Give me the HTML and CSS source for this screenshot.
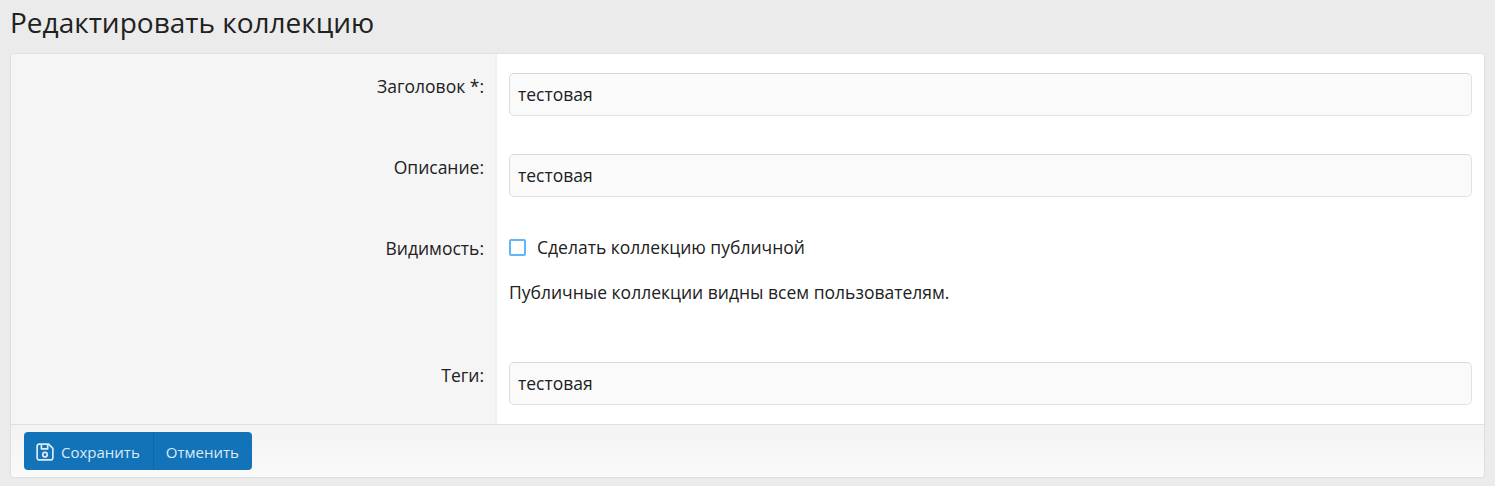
FILE: index.html
```html
<!DOCTYPE html>
<html lang="ru">
<head>
<meta charset="utf-8">
<title>Редактировать коллекцию</title>
<link rel="stylesheet" href="styles.css">
</head>
<body>
<h1 class="title">Редактировать коллекцию</h1>
<form class="panel">
  <div class="rows">
    <div class="row">
      <label class="label">Заголовок *:</label>
      <div class="field"><input class="input" type="text" value="тестовая"></div>
    </div>
    <div class="row">
      <label class="label">Описание:</label>
      <div class="field"><input class="input" type="text" value="тестовая"></div>
    </div>
    <div class="row row-visibility">
      <label class="label">Видимость:</label>
      <div class="field">
        <div class="check-line"><span class="checkbox"></span><span>Сделать коллекцию публичной</span></div>
        <p class="hint">Публичные коллекции видны всем пользователям.</p>
      </div>
    </div>
    <div class="row">
      <label class="label">Теги:</label>
      <div class="field"><input class="input" type="text" value="тестовая"></div>
    </div>
  </div>
  <div class="footer">
    <div class="btn-group">
      <button class="btn" type="button">
        <svg class="icon" viewBox="0 0 16 16" width="18" height="18" fill="none" stroke="currentColor" stroke-width="1.5" stroke-linejoin="round"><path d="M1 2.8A1.8 1.8 0 0 1 2.8 1h8.4L15 4.8v8.4a1.8 1.8 0 0 1-1.8 1.8H2.8A1.8 1.8 0 0 1 1 13.200z"/><path d="M4.800 1v4.200h5.600V1"/><circle cx="8" cy="10.400" r="2"/></svg>
        Сохранить
      </button>
      <button class="btn" type="button">Отменить</button>
    </div>
  </div>
</form>
</body>
</html>
```
FILE: styles.css
```css
* { box-sizing: border-box; }
html, body { height: 100%; }
body {
  margin: 0;
  padding: 0 10px 9px 10px;
  background: #ebebeb;
  color: #212121;
  font-family: "Open Sans", "Noto Sans", sans-serif;
  font-size: 17.5px;
  overflow: hidden;
}
.title {
  margin: 0;
  height: 53px;
  padding-top: 4px;
  font-size: 28px;
  line-height: 36px;
  font-weight: 400;
  color: #212121;
}
.panel {
  background: #fff;
  border: 1px solid #dedede;
  border-top-color: #e2e2e2;
  border-radius: 4px;
  overflow: hidden;
  height: 425px;
}
.row { display: flex; }
.row-visibility { height: 127px; }
.label {
  flex: 0 0 486px;
  padding: 19px 11px 19px 0;
  background: #f5f5f5;
  border-right: 2px solid #f0f0f0;
  text-align: right;
  line-height: 26px;
}
.field { flex: 1; padding: 19px 12px 19px 12px; min-width: 0; }
.input {
  display: block;
  width: 100%;
  height: 43px;
  padding: 0 8px 2px;
  background: #fafafa;
  border: 1px solid #e2e2e2;
  border-top-color: #d8d8d8;
  border-left-color: #dcdcdc;
  border-radius: 5px;
  color: #212121;
  font: inherit;
}
.check-line { display: flex; align-items: center; height: 26px; margin-top: -1px; }
.checkbox {
  flex: none;
  width: 17px;
  height: 17px;
  margin: 1px 11px 0 0;
  background: #fff;
  border: 2px solid #64b5f6;
  border-radius: 2px;
}
.hint { margin: 20px 0 0; line-height: 24px; }
.footer {
  height: 52px;
  padding: 7px 13px;
  border-top: 1px solid #e0e0e0;
  background: linear-gradient(#f3f3f3, #fafafa);
}
.btn-group { display: inline-flex; border-radius: 4px; overflow: hidden; height: 38px; }
.btn {
  display: inline-flex;
  align-items: center;
  gap: 7px;
  padding: 1px 13px 0 12px;
  border: 0;
  background: #1373b9;
  color: #dcebf6;
  font-family: inherit;
  font-size: 15px;
}
.btn + .btn { border-left: 1px solid #0f66a6; }
.icon { flex: none; }
```
